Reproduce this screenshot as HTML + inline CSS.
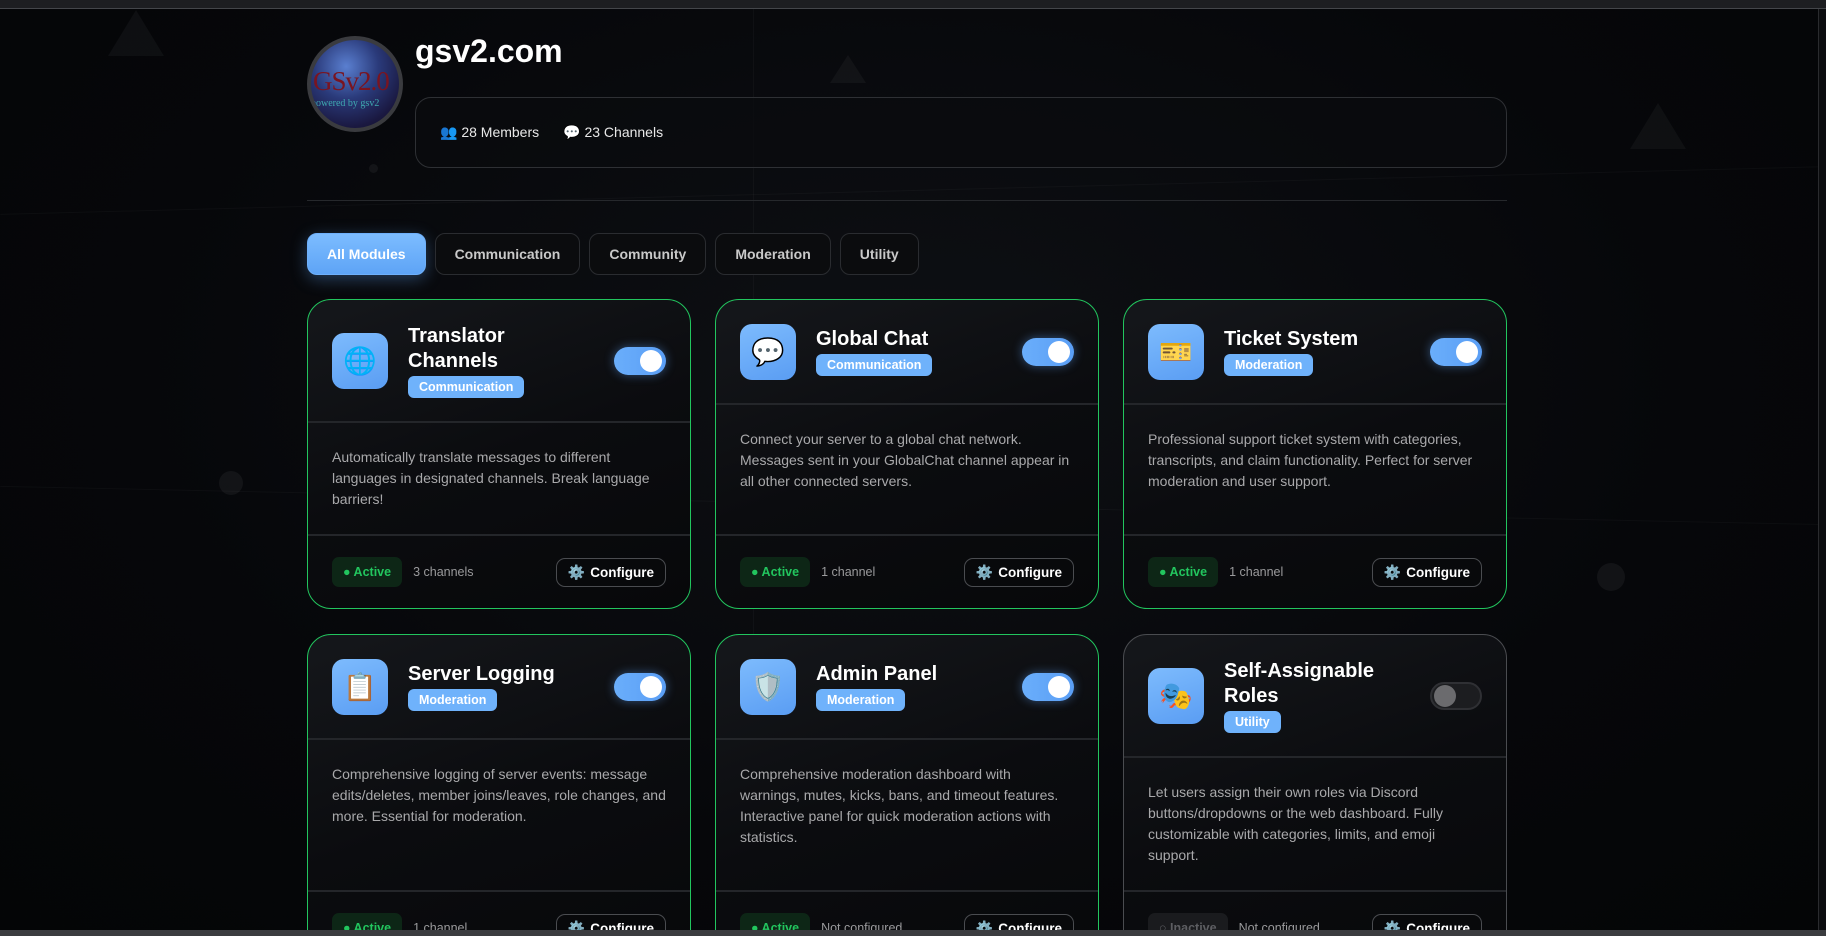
<!DOCTYPE html>
<html><head><meta charset="utf-8"><style>
*{box-sizing:border-box;margin:0;padding:0}
html,body{width:1826px;height:936px;overflow:hidden}
body{background:radial-gradient(ellipse at 50% 40%,#0e1014 0%,#06070a 60%,#040506 100%);font-family:"Liberation Sans",sans-serif;color:#fff;position:relative}
.topbar{position:absolute;left:0;top:0;width:1826px;height:9px;background:#1d1e21;border-bottom:1px solid #44464a}
.botbar{position:absolute;left:0;top:930px;width:1826px;height:6px;background:#3b3c3f}
.scroll{position:absolute;right:0;top:9px;width:8px;height:921px;background:#0c0d0f;border-left:1px solid #2a2b2e}
.bgline{position:absolute;background:rgba(255,255,255,0.03)}
.tri{position:absolute;width:0;height:0;border-left:28px solid transparent;border-right:28px solid transparent;border-bottom:46px solid rgba(255,255,255,0.04)}
.dot{position:absolute;border-radius:50%;background:rgba(255,255,255,0.05)}
.wrap{position:absolute;left:307px;top:0;width:1200px}
.avatar{position:absolute;left:0;top:36px;width:96px;height:96px;border-radius:50%;border:4px solid #3a3b3f;background:radial-gradient(circle at 40% 30%,#5a7fd0 0%,#2a3a7a 40%,#1a1840 75%,#0d0f25 100%);overflow:hidden}
.avatar span{position:absolute;left:2px;top:26px;font-family:"Liberation Serif",serif;font-size:27px;color:#7a1420;letter-spacing:-1px}
.avatar i{position:absolute;left:0;top:58px;font-style:normal;font-family:"Liberation Serif",serif;font-size:10px;color:#3fa9b0;white-space:nowrap}
h1{position:absolute;left:108px;top:32px;font-size:32px;font-weight:bold;line-height:38px}
.stats{position:absolute;left:108px;top:97px;width:1092px;height:71px;border:1px solid #2e3034;border-radius:16px;background:rgba(10,11,14,0.7);padding:0 24px;display:flex;align-items:center;font-size:14px;color:#e8e8e8;gap:24px}
.hr{position:absolute;left:0;top:200px;width:1200px;height:1px;background:#26282c}
.tabs{position:absolute;left:0;top:233px;display:flex;gap:9px}
.tab{height:42px;padding:0 19px;border:1px solid #2a2c30;border-radius:10px;background:#0b0c0e;color:#c9c9c9;font-size:14px;font-weight:bold;display:flex;align-items:center}
.tab.on{background:linear-gradient(180deg,#7cbcff,#5ea4f6);color:#fff;border-color:#6eb0fb;box-shadow:0 4px 16px rgba(96,165,250,0.35)}
.grid{position:absolute;left:0;top:299px;width:1200px;display:grid;grid-template-columns:repeat(3,384px);column-gap:24px;row-gap:25px}
.card{border:1.5px solid #22c55e;border-radius:24px;background:linear-gradient(160deg,#15171b 0%,#0b0c0f 50%,#07080a 100%);display:flex;flex-direction:column;overflow:hidden}
.card.off{border-color:#4a4c50}
.ch{display:flex;align-items:center;padding:23.5px 24px;border-bottom:2px solid #24262a}
.ic{width:56px;height:56px;border-radius:12px;background:linear-gradient(160deg,#7dbbfd,#5a9df3);display:flex;align-items:center;justify-content:center;font-size:27px;flex:none;font-family:"Noto Color Emoji","DejaVu Sans",sans-serif}
.tt{margin-left:20px;flex:1}
.tt b{display:block;font-size:20px;line-height:25px}
.badge{display:inline-block;margin-top:2px;background:#6fb2fb;color:#fff;font-size:12.5px;font-weight:bold;padding:4px 11px;border-radius:6px;line-height:14px}
.tg{width:52px;height:28px;border-radius:14px;background:linear-gradient(90deg,#6aaefb,#5a9ef5);position:relative;flex:none;box-shadow:0 0 10px rgba(96,165,250,0.45)}
.tg::after{content:"";position:absolute;right:4px;top:3px;width:22px;height:22px;border-radius:50%;background:#fff}
.tg.off{background:#1c1d20;border:2px solid #2f3034;box-shadow:none}
.tg.off::after{left:2px;right:auto;top:1px;background:#6b6b6e}
.cb{flex:1;padding:24px;font-size:14px;line-height:21px;color:#a9a9ab;border-bottom:2px solid #24262a}
.cf{height:72px;flex:none;display:flex;align-items:center;padding:0 24px}
.act{height:30px;padding:0 11px;border-radius:7px;background:#0d2616;color:#22c55e;font-size:12.5px;font-weight:bold;display:flex;align-items:center}
.act.in{background:#1a1b1e;color:#5d5e62}
.cnt{margin-left:11px;font-size:12.5px;color:#9a9a9c;flex:1}
.cfg{height:29px;padding:0 11px;border:1.5px solid #4a4c50;border-radius:9px;background:#08090b;color:#fff;font-size:13.5px;font-weight:bold;display:flex;align-items:center;gap:5px}
.cfg span{color:#8fb6d4;font-size:14px}
</style></head><body>
<div class="topbar"></div>
<div class="bgline" style="left:0;top:190px;width:1826px;height:1px;transform:rotate(-1.5deg)"></div>
<div class="bgline" style="left:0;top:505px;width:1826px;height:1px;transform:rotate(1.2deg)"></div>
<div class="bgline" style="left:753px;top:9px;width:1px;height:921px"></div>
<div class="tri" style="left:108px;top:10px"></div>
<div class="tri" style="left:830px;top:55px;border-left-width:18px;border-right-width:18px;border-bottom-width:28px"></div>
<div class="tri" style="left:1630px;top:103px"></div>
<div class="dot" style="left:219px;top:471px;width:24px;height:24px"></div>
<div class="dot" style="left:1597px;top:563px;width:28px;height:28px"></div>
<div class="dot" style="left:369px;top:164px;width:9px;height:9px"></div>
<div class="wrap">
 <div class="avatar"><span>GSv2.0</span><i>powered by gsv2</i></div>
 <h1>gsv2.com</h1>
 <div class="stats"><span>👥 28 Members</span><span>💬 23 Channels</span></div>
 <div class="hr"></div>
 <div class="tabs"><div class="tab on">All Modules</div><div class="tab">Communication</div><div class="tab">Community</div><div class="tab">Moderation</div><div class="tab">Utility</div></div>
 <div class="grid">
  <div class="card"><div class="ch"><div class="ic">🌐</div><div class="tt"><b>Translator<br>Channels</b><span class="badge">Communication</span></div><div class="tg"></div></div>
   <div class="cb">Automatically translate messages to different languages in designated channels. Break language barriers!</div>
   <div class="cf"><div class="act">● Active</div><div class="cnt">3 channels</div><div class="cfg"><span>⚙️</span>Configure</div></div></div>
  <div class="card"><div class="ch"><div class="ic">💬</div><div class="tt"><b>Global Chat</b><span class="badge">Communication</span></div><div class="tg"></div></div>
   <div class="cb">Connect your server to a global chat network. Messages sent in your GlobalChat channel appear in all other connected servers.</div>
   <div class="cf"><div class="act">● Active</div><div class="cnt">1 channel</div><div class="cfg"><span>⚙️</span>Configure</div></div></div>
  <div class="card"><div class="ch"><div class="ic">🎫</div><div class="tt"><b>Ticket System</b><span class="badge">Moderation</span></div><div class="tg"></div></div>
   <div class="cb">Professional support ticket system with categories, transcripts, and claim functionality. Perfect for server moderation and user support.</div>
   <div class="cf"><div class="act">● Active</div><div class="cnt">1 channel</div><div class="cfg"><span>⚙️</span>Configure</div></div></div>
  <div class="card"><div class="ch"><div class="ic">📋</div><div class="tt"><b>Server Logging</b><span class="badge">Moderation</span></div><div class="tg"></div></div>
   <div class="cb">Comprehensive logging of server events: message edits/deletes, member joins/leaves, role changes, and more. Essential for moderation.</div>
   <div class="cf"><div class="act">● Active</div><div class="cnt">1 channel</div><div class="cfg"><span>⚙️</span>Configure</div></div></div>
  <div class="card"><div class="ch"><div class="ic">🛡️</div><div class="tt"><b>Admin Panel</b><span class="badge">Moderation</span></div><div class="tg"></div></div>
   <div class="cb">Comprehensive moderation dashboard with warnings, mutes, kicks, bans, and timeout features. Interactive panel for quick moderation actions with statistics.</div>
   <div class="cf"><div class="act">● Active</div><div class="cnt">Not configured</div><div class="cfg"><span>⚙️</span>Configure</div></div></div>
  <div class="card off"><div class="ch"><div class="ic">🎭</div><div class="tt"><b>Self-Assignable<br>Roles</b><span class="badge">Utility</span></div><div class="tg off"></div></div>
   <div class="cb">Let users assign their own roles via Discord buttons/dropdowns or the web dashboard. Fully customizable with categories, limits, and emoji support.</div>
   <div class="cf"><div class="act in">○ Inactive</div><div class="cnt">Not configured</div><div class="cfg"><span>⚙️</span>Configure</div></div></div>
 </div>
</div>
<div class="scroll"></div>
<div class="botbar"></div>
</body></html>
